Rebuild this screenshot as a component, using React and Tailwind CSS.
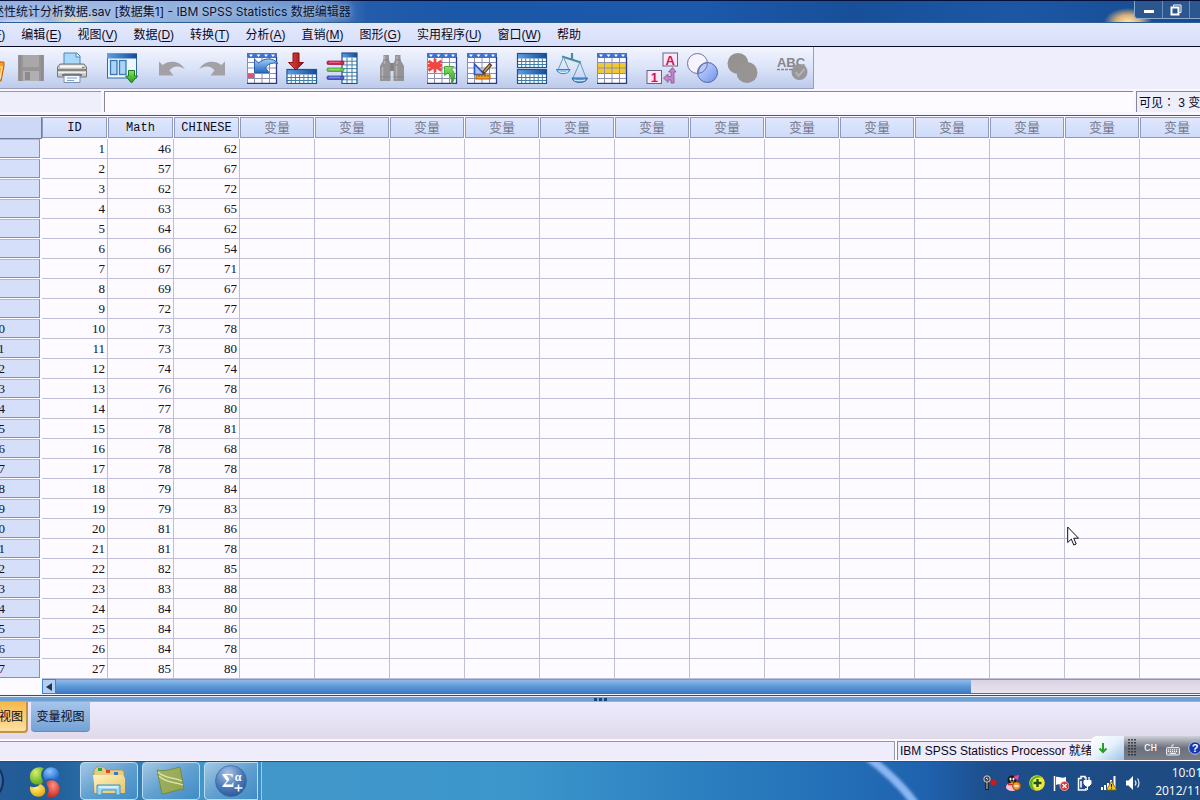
import React from 'react'

const MENUS = [
  ['文件', 'F'], ['编辑', 'E'], ['视图', 'V'], ['数据', 'D'], ['转换', 'T'], ['分析', 'A'],
  ['直销', 'M'], ['图形', 'G'], ['实用程序', 'U'], ['窗口', 'W'], ['帮助', ''],
]

const SCORES = [
  [46, 62], [57, 67], [62, 72], [63, 65], [64, 62], [66, 54], [67, 71], [69, 67], [72, 77],
  [73, 78], [73, 80], [74, 74], [76, 78], [77, 80], [78, 81], [78, 68], [78, 78], [79, 84],
  [79, 83], [81, 86], [81, 78], [82, 85], [83, 88], [84, 80], [84, 86], [84, 78], [85, 89],
]

const EMPTY = Array.from({ length: 13 }, (_, i) => i)

function Svg({ children, className = 'size-8' }) {
  return <svg viewBox="0 0 32 32" className={className} aria-hidden="true">{children}</svg>
}

/* A small table drawing: blue head band over a ruled white body. */
function Sheet({ x, y, w, h, cols, rows, head = 6, line = '#3f7fa8', edge = '#1d5590' }) {
  const cw = w / cols
  const rh = (h - head) / rows
  return (
    <g>
      <rect x={x} y={y} width={w} height={h} fill="#fff" />
      {Array.from({ length: cols - 1 }, (_, i) => (
        <path key={'c' + i} d={`M${x + cw * (i + 1)} ${y + head}V${y + h}`} stroke={line} strokeWidth="1" />
      ))}
      {Array.from({ length: rows - 1 }, (_, i) => (
        <path key={'r' + i} d={`M${x} ${y + head + rh * (i + 1)}H${x + w}`} stroke={line} strokeWidth="1" />
      ))}
      <rect x={x} y={y} width={w} height={head} fill="url(#head)" />
      <rect x={x} y={y} width={w} height={h} fill="none" stroke={edge} strokeWidth="1.2" />
    </g>
  )
}

/* Sheet with notched column heads. */
function CaseSheet({ under, children }) {
  return (
    <Svg>
      <rect x="1.5" y="1.5" width="29" height="30" fill="#fdfcff" />
      {under}
      <path d="M8.500 5V31M16 5V31M23.500 5V31M2 10.500H30M2 16H30M2 21.500H30M2 26.500H30" stroke="#8d8fae" strokeWidth="1" />
      <rect x="1" y="1" width="30" height="5" fill="#3f72d0" />
      <path d="M3 2.500h4l-2 2.500zM10.500 2.500h4l-2 2.500zM18 2.500h4l-2 2.500zM25 2.500h4l-2 2.500z" fill="#fff" />
      <path d="M1.500 5V31.500" stroke="#7b8fc4" />
      <path d="M1 31.400H30.500V5" fill="none" stroke="#2c3a86" strokeWidth="1.300" />
      {children}
    </Svg>
  )
}

const Defs = () => (
  <svg className="absolute size-0" aria-hidden="true">
    <defs>
      <linearGradient id="head"><stop offset="0" stopColor="#5fa0e0" /><stop offset="1" stopColor="#144c9c" /></linearGradient>
      <linearGradient id="blue" x2="0" y2="1"><stop offset="0" stopColor="#9fd0f8" /><stop offset="1" stopColor="#2868c0" /></linearGradient>
      <linearGradient id="red" x2="1" y2="0"><stop offset="0" stopColor="#e04848" /><stop offset="1" stopColor="#9c1010" /></linearGradient>
      <linearGradient id="green" x2="0" y2="1"><stop offset="0" stopColor="#90e060" /><stop offset="1" stopColor="#1e9a1e" /></linearGradient>
      <linearGradient id="venn" x2="1" y2="1"><stop offset="0" stopColor="#cfdcff" /><stop offset="1" stopColor="#6f92ea" /></linearGradient>
      <linearGradient id="folder" x2="1" y2="1"><stop offset="0" stopColor="#fff3c0" /><stop offset="1" stopColor="#e8c468" /></linearGradient>
      <linearGradient id="leaf" x2="1" y2="1"><stop offset="0" stopColor="#a3b468" /><stop offset="1" stopColor="#8fa348" /></linearGradient>
      <filter id="soft" x="-20%" y="-20%" width="140%" height="140%"><feGaussianBlur stdDeviation="1.6" /></filter>
      <radialGradient id="orb" cx=".4" cy=".25" r=".8"><stop offset="0" stopColor="#a8c4e8" /><stop offset=".6" stopColor="#4a78b8" /><stop offset="1" stopColor="#2c5694" /></radialGradient>
      <radialGradient id="ballG" cx=".4" cy=".3" r=".7"><stop offset="0" stopColor="#d8f070" /><stop offset="1" stopColor="#5fae1c" /></radialGradient>
      <radialGradient id="ballB" cx=".4" cy=".3" r=".7"><stop offset="0" stopColor="#8cc4ff" /><stop offset="1" stopColor="#2068d0" /></radialGradient>
      <radialGradient id="ballY" cx=".4" cy=".3" r=".7"><stop offset="0" stopColor="#fff080" /><stop offset="1" stopColor="#e8a810" /></radialGradient>
      <radialGradient id="ballR" cx=".5" cy=".3" r=".7"><stop offset="0" stopColor="#ff9080" /><stop offset="1" stopColor="#c82c24" /></radialGradient>
    </defs>
  </svg>
)

const ICONS = {
  打开: <Svg><path d="M3 6h18l4 4v19H3z" fill="#e87a10" /><path d="M5 10h23v4l-3 15H3z" fill="#ff9a20" stroke="#c85a00" /><path d="M24 15l2 0-2 12" fill="none" stroke="#ffe0a0" strokeWidth="1.500" /></Svg>,
  保存: <Svg><path d="M2 3h26v26H2z" fill="#979595" /><path d="M7 3h16v12H7z" fill="#a9a7a8" /><path d="M7 19h16v10H7z" fill="#b1afb2" /><path d="M9 20h5v8H9z" fill="#8c8a8c" /><path d="M4 3v26M26 3v26" stroke="#858384" /></Svg>,
  打印: (
    <Svg>
      <path d="M9 1h12l3 3v11H8V1z" fill="#a9d8f8" stroke="#4d86b8" /><path d="M20 1v4h4" fill="#e8f6ff" stroke="#4d86b8" />
      <path d="M4 12h24l2.500 3v10H1.500V15z" fill="#c9c7c4" stroke="#77777c" /><path d="M4 14.500h24" stroke="#fff" strokeWidth="2" />
      <path d="M2 18h28" stroke="#6f6f72" strokeWidth="1.500" /><path d="M2 20.500h28" stroke="#eeeeec" strokeWidth="1.500" />
      <path d="M8 22h16v8.500H8z" fill="#f4f8ff" stroke="#8090a8" /><path d="M6 23h20" stroke="#5c5c60" strokeWidth="1.500" /><path d="M11 26h10M11 28.500h7" stroke="#7ca0d0" />
      <path d="M26 15.500h2" stroke="#50a030" strokeWidth="1.500" />
    </Svg>
  ),
  重新调用: (
    <Svg>
      <rect x="1.500" y="2" width="29" height="24" fill="#eef6ff" stroke="#3069a0" /><rect x="1" y="1.500" width="30" height="5" fill="url(#head)" />
      <rect x="4.500" y="8.500" width="6.500" height="14" fill="#a8d4f8" stroke="#3a78b4" strokeWidth="1.300" /><rect x="13.500" y="8.500" width="6.500" height="14" fill="#a8d4f8" stroke="#3a78b4" strokeWidth="1.300" />
      <path d="M22.500 18.500h6v5.500h3L25.500 31l-6-7h3z" fill="url(#green)" stroke="#15801a" />
    </Svg>
  ),
  撤消: <Svg><path d="M3 9.500l3.500 3.500C13 8 24 8 29 17.500 23 13 17 14 13.500 18.500L17.500 23.500H3z" fill="#a3a1a5" /></Svg>,
  重做: <Svg><path d="M29 9.500l-3.500 3.500C19 8 8 8 3 17.500 9 13 15 14 18.500 18.500L14.500 23.500H29z" fill="#a3a1a5" /></Svg>,
  转至个案: (
    <CaseSheet under={<rect x="2" y="22" width="6.500" height="5" fill="#e05070" />}>
      <path d="M8.500 20.500V7l4 4C18 6 27 5 32 11.500c-6-1.500-11 1-12.500 4.500l3.500 4.500z" fill="url(#blue)" stroke="#2460b0" />
    </CaseSheet>
  ),
  转至变量: <Svg><Sheet x={1} y={17.5} w={29.5} h={14} cols={7} rows={3} head={5} /><path d="M7 1h6v9.500h4.500L9.800 18 2.500 10.500H7z" fill="url(#red)" stroke="#8c1010" /></Svg>,
  变量: (
    <Svg>
      <Sheet x={16} y={1} w={15} h={30.5} cols={3} rows={7} head={4.5} />
      <rect x="1" y="9" width="17" height="3.500" rx="1.200" fill="#d82058" stroke="#98103c" strokeWidth=".7" /><rect x="1" y="16" width="17" height="3.500" rx="1.200" fill="#70c050" stroke="#3c8830" strokeWidth=".7" /><rect x="1" y="24" width="17" height="3.500" rx="1.200" fill="#5060d0" stroke="#283888" strokeWidth=".7" />
      <path d="M3 10.200h11M3 17.200h11M3 25.200h11" stroke="#fff" strokeOpacity=".5" strokeWidth=".8" />
    </Svg>
  ),
  查找: (
    <Svg>
      <path d="M7.500 3h5.500v5l1.500 3v18H4V14l3.500-6z" fill="#959396" /><path d="M19 3h5.500v5l3.500 6v15H17.500V11l1.500-3z" fill="#959396" /><path d="M14 11h4v8h-4z" fill="#858386" />
      <path d="M8.500 4v8M6.500 15v12M21 4v8M20.500 14v13" stroke="#b5b3b7" strokeWidth="1.500" /><path d="M7 8h6M19 8h6M4 25h10.500M17.500 25H28" stroke="#848286" />
    </Svg>
  ),
  插入个案: (
    <CaseSheet>
      <path d="M9 6.500v14M2.500 9l13 9.500M15.500 9l-13 9.500M2 13.500h14" stroke="#f04840" strokeWidth="2.800" />
      <path d="M18.500 23.500V14.500h9.500l-2.500 2.500c4 4 4 10 0 15 .5-5-.5-8-3.500-11z" fill="url(#green)" stroke="#2c9a20" strokeWidth=".8" />
    </CaseSheet>
  ),
  插入变量: (
    <CaseSheet>
      <path d="M8.500 12v10.500h10z" fill="#a8c8ff" stroke="#2c58c0" strokeWidth="1.700" /><path d="M25 12L17 21" stroke="#4a3420" strokeWidth="3.500" /><path d="M24 13L18 20" stroke="#d0a060" strokeWidth="1.500" />
      <rect x="10" y="23" width="14" height="4" fill="#f8a020" stroke="#a85c00" /><path d="M13 23v2M16 23v2M19 23v2M22 23v2" stroke="#744000" strokeWidth=".7" />
    </CaseSheet>
  ),
  拆分文件: <Svg><Sheet x={1.5} y={1.5} w={29} h={14} cols={7} rows={3} head={5} /><Sheet x={1.5} y={17.5} w={29} h={14} cols={7} rows={3} head={5} /></Svg>,
  加权个案: (
    <Svg>
      <path d="M16 1v6M6 4.500l19 6" stroke="#4b8ca2" strokeWidth="2.200" fill="none" /><path d="M7.500 5L2 18M7.500 5L13 18M24 10l-7 16M24 10l6 16" stroke="#5e9fba" strokeWidth="1" fill="none" />
      <path d="M0.500 17.500h13.500c-1 5.500-12.500 5.500-13.500 0z" fill="#8fc4f0" stroke="#3b80b4" /><path d="M16 26h15.500c-1 6-14.500 6-15.500 0z" fill="#559ae0" stroke="#286ca8" /><path d="M3 19.500c2 1.500 6 1.500 9 0M18 28c3 1 8 1 11 0" stroke="#e0f4ff" fill="none" />
    </Svg>
  ),
  选择个案: <CaseSheet under={<rect x="2" y="10.500" width="28" height="11" fill="#f0c830" />} />,
  值标签: (
    <Svg>
      <rect x="17" y="1" width="14.500" height="13" fill="#fbe8f4" stroke="#64648c" /><text x="24.300" y="12.500" textAnchor="middle" fill="#d01060" fontFamily="Liberation Sans, sans-serif" fontWeight="bold" fontSize="13">A</text>
      <rect x="1" y="18.500" width="14.500" height="13" fill="#fbe8f4" stroke="#64648c" /><text x="8.300" y="30" textAnchor="middle" fill="#d01060" fontFamily="Liberation Sans, sans-serif" fontWeight="bold" fontSize="13">1</text>
      <path d="M17.500 26l4.500-4v2.500h3V20h-2.500l4-4.500 3.500 4.500H28v11h-3v-3h-3v2.500z" fill="#c684c8" stroke="#86508c" strokeWidth=".8" />
    </Svg>
  ),
  使用变量集: <Svg><circle cx="11.500" cy="11.500" r="10" fill="#f6f5ff" stroke="#71719e" /><circle cx="21.500" cy="20.500" r="10" fill="url(#venn)" stroke="#4d64b0" /><path d="M21.300 10.600A10 10 0 0 1 12.500 21.400 10 10 0 0 1 21.300 10.600z" fill="#b8caf6" stroke="#6474ac" /></Svg>,
  显示所有变量: <Svg><circle cx="12" cy="11.500" r="10.500" fill="#969292" /><circle cx="21" cy="20.500" r="10.500" fill="#989494" /></Svg>,
  拼写检查: (
    <Svg>
      <text x="15" y="14.500" textAnchor="middle" fill="#87858b" fontFamily="Liberation Sans, sans-serif" fontWeight="bold" fontSize="13">ABC</text><path d="M1 17.500h17" stroke="#87858b" strokeWidth="1.500" strokeDasharray="3 1" />
      <circle cx="23.500" cy="20" r="8" fill="#989698" /><path d="M19.500 20l3 4 6-7" stroke="#b3b1b6" strokeWidth="2" fill="none" />
    </Svg>
  ),
}

const TOOL_GROUPS = [
  ['打开', '保存', '打印'], ['重新调用'], ['撤消', '重做'], ['转至个案', '转至变量', '变量'], ['查找'],
  ['插入个案', '插入变量'], ['拆分文件', '加权个案', '选择个案'], ['值标签', '使用变量集', '显示所有变量'], ['拼写检查'],
]

function TitleBar() {
  return (
    <header className="flex h-[23px] items-start justify-between border-t border-b border-t-[#05103a] border-b-[#2c5c94] bg-[radial-gradient(ellipse_38px_9px_at_64px_24px,#eef4ff,transparent),radial-gradient(ellipse_28px_10px_at_120px_20px,#e8e2b8,transparent),linear-gradient(90deg,#8fabd8_0%,#9db7e0_12%,#8dadda_20%,#6690ca_29%,#235cab_33%,#1b58a8_40%,#1c59ab_60%,#184f98_72%,#1d57a4_85%,#164a90_100%)]">
      <h1 className='pt-0.5 pl-6 font-["Inter","Noto_Sans_CJK_SC",sans-serif] text-[12px] leading-[18px] font-normal whitespace-nowrap text-[#0a1230] [text-shadow:0_0_6px_#c8d8f4]'>
        描述性统计分析数据.sav [数据集1] - IBM SPSS Statistics 数据编辑器
      </h1>
      <div className="flex h-[21px] shrink-0 items-start bg-[radial-gradient(ellipse_24px_14px_at_28px_21px,#ffe8b0,#d8b078_50%,transparent)] pl-[34px]">
        <div className="flex h-[18px] w-[66px] overflow-hidden rounded-bl border-b border-l border-[#8aa8cc] bg-[#2b5690]">
          <button aria-label="最小化" className="flex w-7 shrink-0 items-center justify-center border-r border-[#6b8ebc]">
            <span className="mt-1 h-[3px] w-2.5 bg-white" />
          </button>
          <button aria-label="还原" className="flex w-[27px] shrink-0 items-center justify-center border-r border-[#6b8ebc]">
            <svg viewBox="0 0 12 12" className="size-3"><path d="M3.500 2.500V1h7.500v7.500H9.500" fill="none" stroke="#fff" strokeWidth="1" /><rect x="1.500" y="3.500" width="7" height="7" fill="none" stroke="#fff" strokeWidth="2" /></svg>
          </button>
          <button aria-label="关闭" className="w-11 shrink-0" />
        </div>
      </div>
    </header>
  )
}

function MenuBar() {
  return (
    <nav className="flex h-6 items-center gap-4 border-b border-[#0a0a20] bg-gradient-to-b from-[#e4e9fc] to-[#d6def8] pl-2.5 text-[12px] leading-4 text-[#08081c]">
      {MENUS.map(([name, key]) => (
        <button key={name} className="shrink-0 whitespace-nowrap">
          {name}{key && <>(<u className="underline-offset-2">{key}</u>)</>}
        </button>
      ))}
    </nav>
  )
}

function Toolbar() {
  return (
    <div className="flex bg-[#eeeefd]">
      <div role="toolbar" className="flex h-[42px] items-center gap-2.5 border-r border-b border-[#9a9ebc] bg-gradient-to-b from-[#f3f5fe] via-[#dbe4f8] to-[#bccbeb] pr-px pl-4">
        {TOOL_GROUPS.map((group) => (
          <div key={group[0]} className="flex">
            {group.map((name) => (
              <button key={name} aria-label={name} className="flex w-10 shrink-0 justify-center">{ICONS[name]}</button>
            ))}
          </div>
        ))}
      </div>
    </div>
  )
}

function CellEditor() {
  return (
    <div className="flex gap-[3px] bg-[#f8f6ff] pt-0.5 pb-[3px] text-[12px] leading-5 text-[#08081c]">
      <div className="h-[21px] w-[145px] shrink-0 border-t border-[#9698ae] bg-[#efeffc]" />
      <input aria-label="单元格内容" className="h-[21px] min-w-0 flex-1 border-t border-l border-[#8486a0] bg-[#fdfbff] px-1 outline-none" />
      <div className="h-[21px] w-16 shrink-0 overflow-hidden border-t border-l border-[#8486a0] bg-[#efeffc] pl-0.5 whitespace-nowrap">
        可见<span className='font-["Noto_Sans_CJK_TC",sans-serif]' lang="zh-TW">：</span> 3 变量的 3 变量
      </div>
    </div>
  )
}

function HeadCell({ children, faint }) {
  return (
    <th scope="col" className="p-0 font-normal">
      <div className={'mr-px mb-px h-[21px] border border-[#8f98bd] bg-gradient-to-b from-[#e0e7fd] to-[#cfdbfa] leading-5 ' + (faint ? 'text-[13px] text-[#74788c]' : 'font-["Liberation_Mono","Noto_Sans_CJK_SC",monospace] text-[12px] text-[#0c0c20]')}>
        {children}
      </div>
    </th>
  )
}

function DataGrid() {
  const cell = 'h-5 border-r border-b border-[#bfc0d8] p-0 '
  const num = cell + 'pr-0.5 text-right'
  return (
    <div className="overflow-hidden border-t border-[#30608e] bg-[#fdfbff] pt-px">
      <table className="w-[1259px] table-fixed border-separate border-spacing-0">
        <colgroup>
          <col className="w-[86px]" /><col className="w-[66px]" /><col className="w-[66px]" /><col className="w-[66px]" />
          {EMPTY.map((i) => <col key={i} className="w-[75px]" />)}
        </colgroup>
        <thead>
          <tr>
            <td className="h-[22px] border-r border-b border-[#727c9c] bg-[#ccd8f6] p-0" />
            <HeadCell>ID</HeadCell><HeadCell>Math</HeadCell><HeadCell>CHINESE</HeadCell>
            {EMPTY.map((i) => <HeadCell key={i} faint>变量</HeadCell>)}
          </tr>
        </thead>
        <tbody className='font-["Liberation_Serif",serif] text-[13px] leading-[18px] text-[#14101c]'>
          {SCORES.map(([math, chinese], i) => (
            <tr key={i}>
              <th scope="row" className="h-5 p-0 text-left font-normal">
                <div className="mr-0.5 mb-px h-[19px] border-t border-r border-b border-t-[#aeb8dc] border-r-[#8790b4] border-b-[#8790b4] bg-[#d5dffa] pl-9">{i + 1}</div>
              </th>
              <td className={num}>{i + 1}</td>
              <td className={num}>{math}</td>
              <td className={num}>{chinese}</td>
              {EMPTY.map((k) => <td key={k} className={cell} />)}
            </tr>
          ))}
        </tbody>
      </table>
      <div className="flex h-[15px] pl-[86px]">
        <button aria-label="向左滚动" className="flex w-[14px] shrink-0 items-center justify-center border border-[#3c84cc] bg-[#b4d0f4]">
          <svg viewBox="0 0 6 8" className="h-2 w-1.5"><path d="M6 0v8L0 4z" fill="#24364e" /></svg>
        </button>
        <div className="flex-1 border-y border-t-[#6aa0d8] border-b-[#3a74b4] bg-gradient-to-b from-[#d9d3e2] to-[#eae2ef]">
          <div className="h-full w-4/5 bg-gradient-to-b from-[#8dbbeb] via-[#5d97d6] to-[#3f7cc4]" />
        </div>
      </div>
    </div>
  )
}

function ViewTabs() {
  return (
    <div>
      <div className="h-px bg-[#f4f4ff]" />
      <div className="h-px bg-[#20568e]" />
      <div className="h-px bg-[#e6eefc]" />
      <div className="flex h-[5px] items-center justify-center gap-0.5 border-b border-[#8fb4d8] bg-[#6d9fd0] pl-11">
        <i className="size-[3px] bg-[#1c4478]" /><i className="size-[3px] bg-[#1c4478]" /><i className="size-[3px] bg-[#1c4478]" />
      </div>
      <div role="tablist" className="flex h-[37px] items-start gap-[3px] bg-gradient-to-b from-[#eeebff] to-[#e0d9ea] text-[12px] text-[#0a0a1c]">
        <button role="tab" aria-selected="true" className="h-[31px] w-[72px] rounded-b border-r-2 border-b-2 border-[#c09448] bg-gradient-to-b from-[#f8b848] to-[#fde0a0] pr-[3px] text-right">数据视图</button>
        <button role="tab" aria-selected="false" className="h-[30px] w-[59px] rounded-b border-b border-[#5f8ec4] bg-gradient-to-b from-[#a5c4ea] to-[#74a2d6] whitespace-nowrap">变量视图</button>
      </div>
    </div>
  )
}

function LanguageBar() {
  return (
    <div className="absolute right-0 bottom-px flex h-6">
      <div className="flex w-[33px] items-center rounded-l-md bg-gradient-to-br from-white via-[#e6f2fc] to-[#9cc4ea] pl-1.5">
        <svg viewBox="0 0 12 12" className="size-3"><path d="M6 1v9M2.500 6.500L6 10l3.500-3.500" fill="none" stroke="#25a025" strokeWidth="2" /></svg>
      </div>
      <div className="flex w-[76px] items-center overflow-hidden bg-gradient-to-b from-[#d0d2da] via-[#6c707c] to-[#7a7e88] pl-1">
        <svg viewBox="0 0 8 18" className="h-[18px] w-2 shrink-0"><path d="M1 0V18M4 0V18M7 0V18" stroke="#23262e" strokeWidth="1.500" strokeDasharray="1.500 1.500" /></svg>
        <span className='ml-2 w-4 shrink-0 font-["Liberation_Mono",monospace] text-[11px] text-white'>CH</span>
        <svg viewBox="0 0 14 12" className="mt-1 ml-1.5 h-3 w-3.5 shrink-0"><path d="M6 3V1h2" stroke="#e8e8ee" fill="none" /><rect x=".5" y="3.500" width="13" height="7.500" rx="1" fill="#8c8f98" stroke="#e8e8ee" /><path d="M2 5.800h10M2 7.500h10" stroke="#fff" strokeDasharray="1 1" /><path d="M4 9.300h6" stroke="#fff" /></svg>
        <svg viewBox="0 0 14 14" className="ml-2 size-3.5 shrink-0"><circle cx="7" cy="7" r="6.300" fill="#1838a8" stroke="#b8c8f4" /><text x="7" y="11" textAnchor="middle" fill="#fff" fontFamily="Liberation Sans, sans-serif" fontWeight="bold" fontSize="11">?</text></svg>
      </div>
    </div>
  )
}

function StatusBar() {
  return (
    <div className="relative flex gap-0.5 bg-[#fbf9ff] pt-0.5 pb-px">
      <div className="h-[19px] flex-1 border-t border-r border-[#9698b0] bg-[#efedfb]" />
      <div className="h-[19px] w-[303px] shrink-0 border-t border-l border-[#8486a0] bg-[#efedfb] pl-0.5 text-[12px] leading-[18px] whitespace-nowrap text-[#08081c]">IBM SPSS Statistics Processor 就绪</div>
      <LanguageBar />
    </div>
  )
}

function T({ label, children }) {
  return <button aria-label={label} className="size-4 shrink-0"><svg viewBox="0 0 16 16" className="size-4">{children}</svg></button>
}

function Tray() {
  return (
    <div className="flex h-full shrink-0 items-center">
      <div className="flex gap-2 pt-1">
        <T label="麦克风"><path d="M6 5v10" stroke="#1c1818" strokeWidth="3.500" /><path d="M6 6v8" stroke="#b8b4b4" strokeWidth="1.200" /><circle cx="6" cy="4" r="3.200" fill="#4a4444" stroke="#e0dada" strokeWidth=".9" /><path d="M5 3l2 1.500" stroke="#fff" /><rect x="9.500" y="4.500" width="6" height="5.500" rx="2" fill="#d01818" /></T>
        <T label="QQ"><ellipse cx="7" cy="5" rx="4.500" ry="4.500" fill="#151515" /><path d="M9 1l5-1-1 5-3-1z" fill="#f040a0" /><ellipse cx="7" cy="12" rx="6" ry="4" fill="#f8c0d8" /><ellipse cx="5.500" cy="4" rx="1" ry="1.500" fill="#fff" /><ellipse cx="8.500" cy="4" rx="1" ry="1.500" fill="#fff" /><path d="M4.500 6.500h5L7 8z" fill="#f8a020" /><path d="M3 9.500h8" stroke="#e02828" strokeWidth="1.500" /><circle cx="11.500" cy="11" r="4" fill="#f49a3c" stroke="#a85008" /><path d="M9.500 11h4" stroke="#fff" strokeWidth="1.500" /></T>
        <T label="安全卫士"><circle cx="8" cy="8" r="7.800" fill="#ece428" /><path d="M.5 9C1 2 8-1 13 2.500 8 2 4 4 3.500 8c-.2 3 1 5 3 7C3 15 .5 12 .5 9z" fill="#5cb428" /><circle cx="8.500" cy="8" r="4.800" fill="#f4f060" /><path d="M8.500 4v8M4.500 8h8" stroke="#205018" strokeWidth="2.400" /></T>
        <T label="操作中心"><path d="M1.500 1v15" stroke="#fff" strokeWidth="1.500" /><path d="M3 2c3-1 5 2 10 0v7c-4 2-7-1-10 1z" fill="#fff" /><circle cx="11.500" cy="11" r="4.500" fill="#d83030" stroke="#ffd4d0" strokeWidth=".7" /><path d="M9.500 9l4 4M13.500 9l-4 4" stroke="#fff" strokeWidth="1.500" /></T>
        <T label="电源"><path d="M8 3.500V1.500H4v2H1.500V15h7.500v-2" fill="none" stroke="#fff" strokeWidth="1.500" /><path d="M4 6v6.500" stroke="#c8dcf0" strokeWidth="2" /><path d="M9 2v4M12 2v4" stroke="#fff" strokeWidth="1.300" /><path d="M7 5.500h7V9l-2 2H9L7 9zM10.500 11v4" fill="#fff" stroke="#fff" /></T>
        <T label="网络"><path d="M1 15v-3M4 15v-5M7 15V8M10 15V5M13.500 15V1" stroke="#fff" strokeWidth="2" /><path d="M10.500 6l5 9h-10z" fill="#f8cc20" stroke="#886000" strokeWidth=".8" /><path d="M10.500 9v3.200M10.500 13.200v1" stroke="#201800" strokeWidth="1.200" /></T>
        <T label="音量"><path d="M1 5.500h2.500L8 1v14l-4.500-4.500H1z" fill="#fff" /><path d="M10 5.500c1.200 1.500 1.200 3.500 0 5M12.500 3.500c2 2.500 2 6.500 0 9" stroke="#e4eefa" strokeWidth="1.200" fill="none" /></T>
      </div>
      <div className='w-[59px] overflow-hidden pl-3 font-["Open_Sans",sans-serif] text-[12px] leading-[18px] text-white'>
        <div className="flex w-[68px] flex-col items-center pt-0.5"><time>10:01</time><time>2012/11/16</time></div>
      </div>
    </div>
  )
}

function Taskbar() {
  const app = 'flex h-[38px] shrink-0 items-center justify-center rounded-sm border border-[#b9dcf2] bg-gradient-to-br from-[#a4c8e4] via-[#62a0d0] to-[#3f8cc6] '
  return (
    <footer className="flex h-[39px] items-end border-t border-[#28507c] bg-[linear-gradient(90deg,#2a5c94_0%,#1f5c98_7%,#4397c8_20%,#3c96cc_45%,#2a7cbe_62%,#2470b8_70%,#1f62ae_78%,#1d4f8c_83%,#1d4a80_100%)]">
      <div className="flex min-w-0 flex-1 items-end">
        <button aria-label="开始" className="flex w-[49px] shrink-0 justify-end"><svg viewBox="0 0 44 38" className="h-[38px] w-11"><circle cx="22" cy="19" r="21" fill="#12305c" /><circle cx="22" cy="19" r="19" fill="url(#orb)" /></svg></button>
        <button aria-label="浏览器" className="flex w-[75px] shrink-0 justify-center pb-0.5 pl-1">
          <Svg>
            <path d="M13 1.500C5 0 0 6 1 12.500c.6 4 4 6.500 9 6 4-.5 4.500-3 3-6C11.500 9 12 5 15 2.500z" fill="url(#ballG)" />
            <path d="M15 5.500C18 0 26 0 29 5c2 4 1 8-2 10-3-3-8-3-11-.5C14.500 12 13.500 8.500 15 5.500z" fill="url(#ballB)" />
            <path d="M1 20.500c3 1.500 8 1 10-2.500 4 1 6 5 5 8.500C14.500 31 8 32 4 29c-2.500-2-3.500-5-3-8.500z" fill="url(#ballY)" />
            <path d="M18 15.500c4-2.500 10-1 12 4 2 6-1 10-5 11.500-3 1-6 .5-7.500-1C20 27 20.500 23 18.500 20c-1-2-1.500-3.500-.5-4.500z" fill="url(#ballR)" />
          </Svg>
        </button>
        <div className="flex gap-1">
          <button aria-label="资源管理器" className={app + 'w-[58px]'}>
            <svg viewBox="0 0 34 32" className="h-8 w-[34px]"><path d="M2 5l3-3h7l2 3h16l2 2v21H2z" fill="#e9cc80" stroke="#b08c40" strokeWidth=".7" /><path d="M6 3h4v3H6z" fill="#30a040" /><path d="M14 5h4v3h-4z" fill="#d84830" /><path d="M22 7h4v3h-4z" fill="#3878c8" /><path d="M1 10h30l2 3v15H3z" fill="url(#folder)" /><path d="M5 30V20h23v10h-4v-5H10v5z" fill="#9fd8f4" stroke="#3d94c8" /><path d="M7 22h19" stroke="#eafaff" strokeWidth="1.500" /></svg>
          </button>
          <button aria-label="录屏" className={app + 'w-[58px]'}>
            <Svg><path d="M2 5c7 2 15-1 23-3l4 22c-8 1-15 4-22 5z" fill="url(#leaf)" stroke="#6e8430" strokeWidth=".8" /><path d="M3 7c7 7 15 5 24 9M4 11c7 7 15 6 24 9" fill="none" stroke="#dfe4b4" strokeWidth="1.300" /></Svg>
          </button>
          <button aria-label="SPSS Statistics" className={app + 'w-[54px] rounded-r-none'}>
            <Svg><circle cx="16" cy="16" r="15.500" fill="url(#orb)" stroke="#3c66a0" strokeWidth=".7" /><text x="13" y="22" textAnchor="middle" fontSize="19" fill="#fff" fontFamily="Liberation Serif, serif" fontWeight="bold">Σ</text><text x="23" y="15.500" textAnchor="middle" fontSize="12" fill="#fff" fontFamily="Liberation Serif, serif" fontWeight="bold">α</text><path d="M19.500 23h8M23.500 19.500v7" stroke="#fff" strokeWidth="1.600" /></Svg>
          </button>
          <div className="-ml-1 h-[38px] w-1 border-r border-[#9ccae8] bg-[#3f8cc6]" />
        </div>
        <div className="flex h-[38px] min-w-0 flex-1 justify-end overflow-hidden pr-14">
          <svg viewBox="0 0 70 38" className="h-[38px] w-[70px] shrink-0" aria-hidden="true"><path d="M11 -6C28 6 46 22 62 44" fill="none" stroke="#8ab6f2" strokeWidth="8" filter="url(#soft)" /></svg>
        </div>
      </div>
      <Tray />
    </footer>
  )
}

export default function App() {
  return (
    <div className='relative min-h-screen overflow-hidden bg-[#efedfb] font-["Liberation_Sans","Noto_Sans_CJK_SC",sans-serif]'>
      <Defs />
      <div className="-ml-11">
        <TitleBar />
        <MenuBar />
        <Toolbar />
        <CellEditor />
        <DataGrid />
        <ViewTabs />
        <StatusBar />
        <Taskbar />
      </div>
      <svg viewBox="0 0 12 20" className="absolute top-[526px] left-[1067px] h-5 w-3" aria-hidden="true">
        <path d="M.7 1v15.500l3.600-3.400 2.500 5.900 2.400-1-2.500-5.800h4.800z" fill="#fff" stroke="#101018" />
      </svg>
    </div>
  )
}
